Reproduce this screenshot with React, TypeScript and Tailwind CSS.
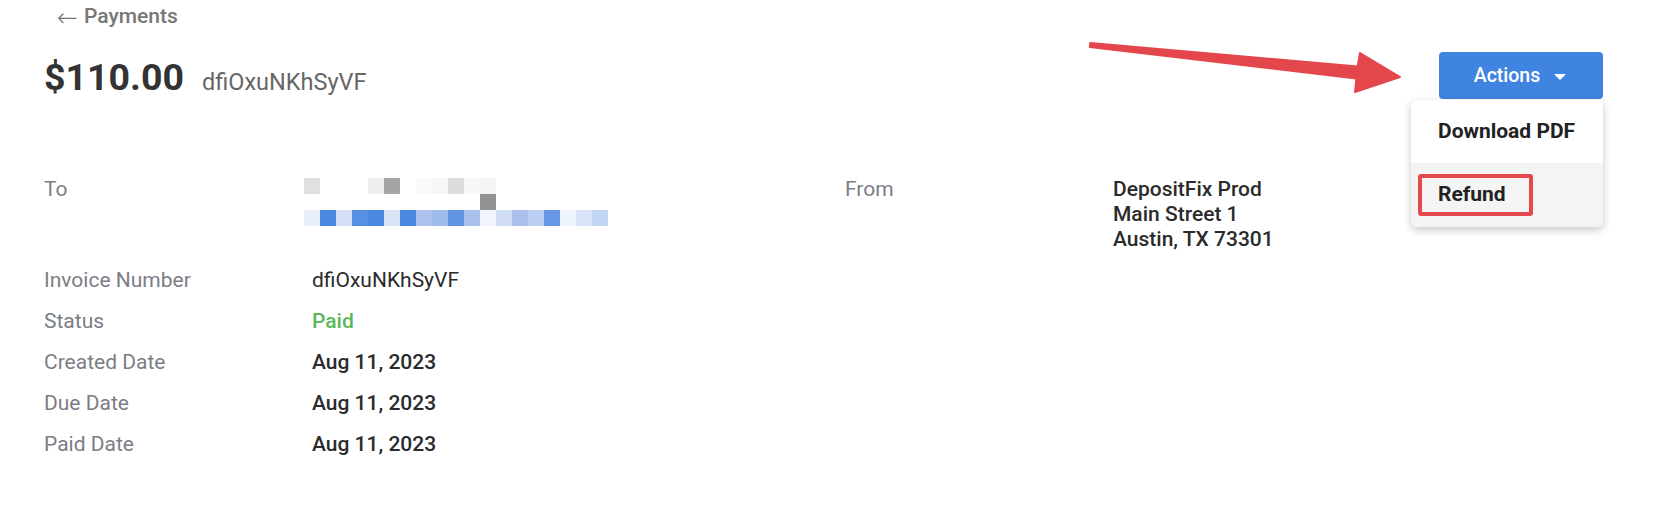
import { useState } from 'react'

// redacted recipient, rendered as mosaic blocks (16px cells)
const recipientRow1 = [
  'bg-[#e0e0e0]', 'bg-white', 'bg-white', 'bg-white', 'bg-[#efefef]', 'bg-[#a5a5a5]',
  'bg-white', 'bg-[#fafafa]', 'bg-[#f6f6f6]', 'bg-[#dcdcdc]', 'bg-[#f8f8f8]', 'bg-[#f4f4f4]',
]
const recipientRow2 = [
  'bg-white', 'bg-white', 'bg-white', 'bg-white', 'bg-white', 'bg-white',
  'bg-white', 'bg-white', 'bg-white', 'bg-white', 'bg-white', 'bg-[#929292]',
]
const recipientRow3 = [
  'bg-[#e9effb]', 'bg-[#4888e0]', 'bg-[#d6dff7]', 'bg-[#5590e2]', 'bg-[#4888e0]', 'bg-[#d9e4f7]',
  'bg-[#4b89e0]', 'bg-[#adc1ee]', 'bg-[#a0bceb]', 'bg-[#6195e4]', 'bg-[#a9c1ec]', 'bg-[#f0f4fc]',
  'bg-[#d0dcf4]', 'bg-[#acc0ee]', 'bg-[#bccef2]', 'bg-[#6797e4]', 'bg-[#eef4fc]', 'bg-[#dae3f8]',
  'bg-[#c2d4f4]',
]

function Mosaic() {
  return (
    <div className="-ml-[8px] mt-[1px] flex flex-col">
      {[recipientRow1, recipientRow2, recipientRow3].map((row, i) => (
        <div key={i} className="flex">
          {row.map((cls, j) => (
            <div key={j} className={`h-[16px] w-[16px] ${cls}`} />
          ))}
        </div>
      ))}
    </div>
  )
}

function DetailRow({ label, children }: { label: string; children: React.ReactNode }) {
  return (
    <div className="flex leading-[25px]">
      <div className="w-[268px] shrink-0 text-[#7d7d86]">{label}</div>
      <div className="text-[#2b2b2b]">{children}</div>
    </div>
  )
}

function ActionsMenu() {
  const [open] = useState(true)
  return (
    <div className="relative">
      <button
        type="button"
        className="flex h-[47px] w-[164px] items-center justify-center gap-[14px] rounded-[4px] bg-[#3f84e0] pr-[2px] text-[19.5px] font-medium text-white"
      >
        <span>Actions</span>
        <svg width="12" height="6" viewBox="0 0 12 6" className="mt-[2px]">
          <path d="M0 0 L12 0 L6 6 Z" fill="white" />
        </svg>
      </button>
      {open && (
        <div className="absolute top-[48px] right-0 w-[192px] overflow-hidden rounded-[6px] bg-white shadow-[0_3px_8px_rgba(0,0,0,0.22)]">
          <div className="flex h-[63px] items-center pl-[27px] text-[21px] font-bold text-[#222]">
            Download PDF
          </div>
          <div className="relative flex h-[64px] items-center bg-[#f4f4f4] pl-[27px] text-[21px] font-bold text-[#222]">
            Refund
            {/* annotation box */}
            <div className="absolute top-[11px] left-[7px] h-[42px] w-[115px] rounded-[3px] border-[4px] border-[#e5484d]" />
          </div>
        </div>
      )}
    </div>
  )
}

function App() {
  return (
    <div className="relative min-h-[510px] bg-white pr-[51px] pl-[44px] font-['Roboto',_'Liberation_Sans',_sans-serif]">
      <div className="ml-[13px] flex h-[31px] items-center pt-[3px] text-[21px] font-medium text-[#777]">
        <span className="inline-block w-[27px] font-['DejaVu_Sans',_sans-serif] text-[25px] leading-none font-extralight">←</span>
        <span>Payments</span>
      </div>

      <header className="mt-[21px] flex items-start justify-between">
        <div className="mt-[4px] flex items-baseline gap-[18px]">
          <h1 className="text-[37.5px] leading-[42px] font-bold text-[#333]">$110.00</h1>
          <span className="text-[23.5px] text-[#666]">dfiOxuNKhSyVF</span>
        </div>
        <ActionsMenu />
      </header>

      <main className="mt-[77px] flex flex-col gap-[16px] text-[21px]">
        <div className="flex">
          <div className="w-[801px] shrink-0">
            <DetailRow label="To">
              <Mosaic />
            </DetailRow>
          </div>
          <DetailRow label="From">
            <div className="font-medium">
              <div>DepositFix Prod</div>
              <div>Main Street 1</div>
              <div>Austin, TX 73301</div>
            </div>
          </DetailRow>
        </div>
        <DetailRow label="Invoice Number">dfiOxuNKhSyVF</DetailRow>
        <DetailRow label="Status">
          <span className="font-medium text-[#5cb85c]">Paid</span>
        </DetailRow>
        <DetailRow label="Created Date">
          <span className="font-medium">Aug 11, 2023</span>
        </DetailRow>
        <DetailRow label="Due Date">
          <span className="font-medium">Aug 11, 2023</span>
        </DetailRow>
        <DetailRow label="Paid Date">
          <span className="font-medium">Aug 11, 2023</span>
        </DetailRow>
      </main>

      {/* red annotation arrow pointing at the Actions button */}
      <svg
        className="pointer-events-none absolute top-0 left-0"
        width="1654"
        height="510"
        viewBox="0 0 1654 510"
      >
        <path
          d="M1090.2 43 L1357.6 66.5 L1360 53 L1400 77 L1355 92 L1356.4 78.5 L1089.8 47 Z"
          fill="#e3474c"
          stroke="#e3474c"
          strokeWidth="2"
          strokeLinejoin="round"
        />
      </svg>
    </div>
  )
}

export default App
